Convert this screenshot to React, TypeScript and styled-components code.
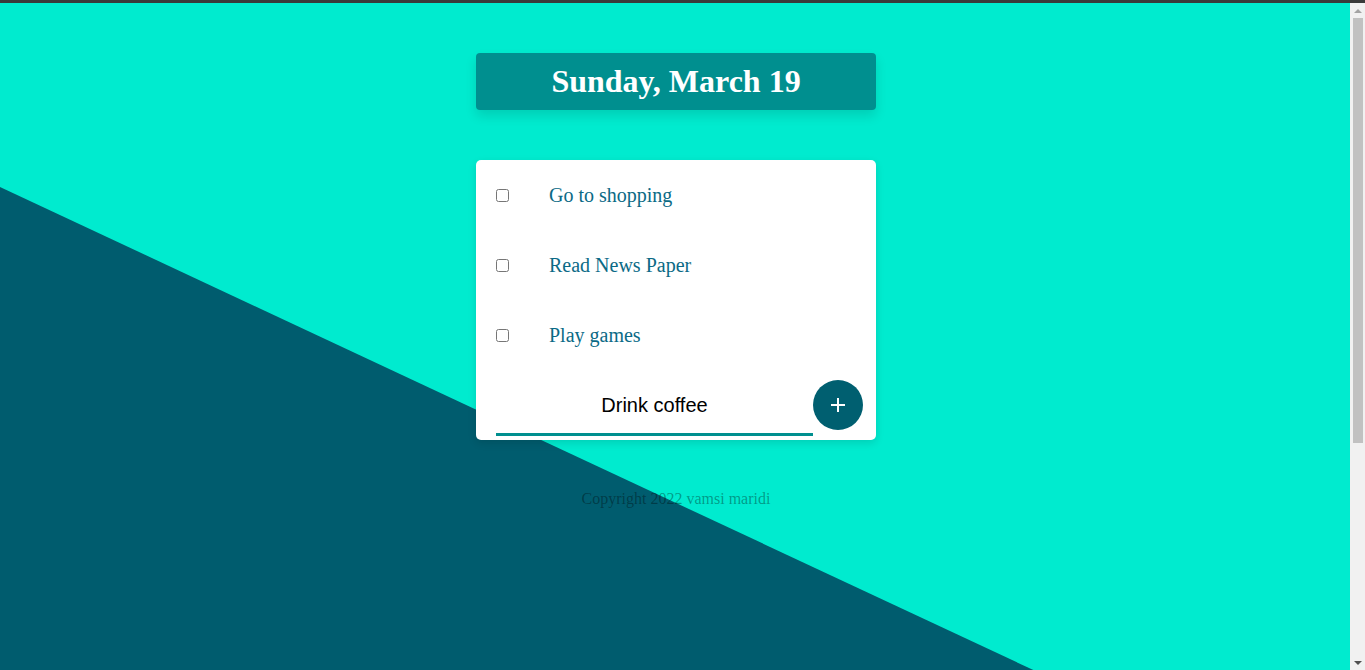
import React, { useState } from "react";
import styled, { createGlobalStyle } from "styled-components";

const GlobalStyle = createGlobalStyle`
  html, body {
    margin: 0;
    padding: 0;
    height: 100%;
    overflow: hidden;
  }
  body {
    background: #00ebcf;
    font-family: "Liberation Serif", "Times New Roman", serif;
  }
  #root {
    height: 100%;
  }
`;

const Frame = styled.div`
  height: 100%;
  display: flex;
  flex-direction: column;
`;

const TopEdge = styled.div`
  flex: none;
  height: 3px;
  background: #3a3a3a;
`;

const Window = styled.div`
  flex: 1;
  min-height: 0;
  display: flex;
`;

const Viewport = styled.div`
  flex: 1;
  min-width: 0;
  overflow: hidden;
`;

const Scrollbar = styled.div`
  flex: none;
  width: 15px;
  background: #f1f1f1;
  display: flex;
  flex-direction: column;
  align-items: center;
`;

const Arrow = styled.div<{ $down?: boolean; $dim?: boolean }>`
  flex: none;
  height: 15px;
  width: 15px;
  display: flex;
  align-items: center;
  justify-content: center;
  &::after {
    content: "";
    width: 0;
    height: 0;
    border-left: 4px solid transparent;
    border-right: 4px solid transparent;
    ${(p) =>
      p.$down
        ? `border-top: 4px solid ${p.$dim ? "#a3a3a3" : "#505050"};`
        : `border-bottom: 4px solid ${p.$dim ? "#a3a3a3" : "#505050"};`}
  }
`;

const Track = styled.div`
  flex: 1;
  width: 100%;
  display: flex;
  justify-content: center;
`;

const Thumb = styled.div`
  width: 10px;
  height: 425px;
  background: #c1c1c1;
`;

const Page = styled.div`
  position: relative;
  min-height: 997px;
  display: flex;
  flex-direction: column;
  align-items: center;
  padding-top: 50px;
  padding-left: 2px;
  box-sizing: border-box;

  &::before {
    content: "";
    position: absolute;
    inset: 0;
    background: #005c6e;
    clip-path: polygon(0 184px, 100% 815px, 100% 100%, 0 100%);
    z-index: 0;
  }
`;

const Content = styled.div`
  position: relative;
  z-index: 1;
  display: flex;
  flex-direction: column;
  align-items: center;
  gap: 50px;
  width: 400px;
`;

const Heading = styled.div`
  width: 100%;
  box-sizing: border-box;
  background: #008f8f;
  border-radius: 4px;
  padding: 10px;
  text-align: center;
  box-shadow: 0 6px 12px rgba(0, 0, 0, 0.12);
`;

const Title = styled.h1`
  margin: 0;
  color: #ffffff;
  font-family: "Liberation Serif", "Times New Roman", serif;
  font-weight: 700;
  font-size: 32px;
  line-height: 37px;
`;

const Card = styled.div`
  width: 100%;
  background: #ffffff;
  border-radius: 5px;
  box-shadow: 0 3px 8px rgba(0, 0, 0, 0.12);
  display: flex;
  flex-direction: column;
`;

const Row = styled.label`
  height: 70px;
  display: flex;
  align-items: center;
  padding-left: 20px;
`;

const Check = styled.input`
  margin: 0;
  width: 13px;
  height: 13px;
`;

const ItemText = styled.span<{ $done: boolean }>`
  margin-left: 40px;
  font-family: "Liberation Serif", "Times New Roman", serif;
  font-size: 20px;
  color: #0b6a86;
  text-decoration: ${(p) => (p.$done ? "line-through" : "none")};
`;

const Form = styled.form`
  height: 70px;
  box-sizing: border-box;
  padding: 4px 13px 4px 20px;
  display: flex;
  align-items: center;
`;

const TextInput = styled.input`
  flex: 1;
  min-width: 0;
  height: 62px;
  box-sizing: border-box;
  border: none;
  border-bottom: 3px solid #008f8f;
  outline: none;
  text-align: center;
  font-family: "Liberation Sans", Arial, sans-serif;
  font-size: 20px;
  color: #000000;
  background: transparent;
  padding: 3px 0 0;
`;

const AddButton = styled.button`
  flex: none;
  width: 50px;
  height: 50px;
  border-radius: 50%;
  border: none;
  background: #005f70;
  color: #ffffff;
  display: flex;
  align-items: center;
  justify-content: center;
  cursor: pointer;
  padding: 0;
`;

const Footer = styled.footer`
  margin-top: 0;
  text-align: center;
  font-family: "Liberation Serif", "Times New Roman", serif;
  font-size: 16px;
  color: rgba(0, 0, 0, 0.36);
`;

const initial = ["Go to shopping", "Read News Paper", "Play games"];

export default function App() {
  const [items, setItems] = useState(initial.map((t) => ({ text: t, done: false })));
  const [value, setValue] = useState("Drink coffee");

  return (
    <>
      <GlobalStyle />
      <Frame>
        <TopEdge />
        <Window>
          <Viewport>
            <Page>
              <Content>
                <Heading>
                  <Title>Sunday, March 19</Title>
                </Heading>
                <Card>
                  {items.map((item, i) => (
                    <Row key={i}>
                      <Check
                        type="checkbox"
                        checked={item.done}
                        onChange={() =>
                          setItems(
                            items.map((it, j) => (j === i ? { ...it, done: !it.done } : it))
                          )
                        }
                      />
                      <ItemText $done={item.done}>{item.text}</ItemText>
                    </Row>
                  ))}
                  <Form
                    onSubmit={(e) => {
                      e.preventDefault();
                      if (value.trim()) {
                        setItems([...items, { text: value, done: false }]);
                        setValue("");
                      }
                    }}
                  >
                    <TextInput value={value} onChange={(e) => setValue(e.target.value)} />
                    <AddButton type="submit" aria-label="Add">
                      <svg width="14" height="14" viewBox="0 0 14 14">
                        <path d="M7 0v14M0 7h14" stroke="#ffffff" strokeWidth="2" />
                      </svg>
                    </AddButton>
                  </Form>
                </Card>
                <Footer>Copyright 2022 vamsi maridi</Footer>
              </Content>
            </Page>
          </Viewport>
          <Scrollbar>
            <Arrow $dim />
            <Track>
              <Thumb />
            </Track>
            <Arrow $down />
          </Scrollbar>
        </Window>
      </Frame>
    </>
  );
}
